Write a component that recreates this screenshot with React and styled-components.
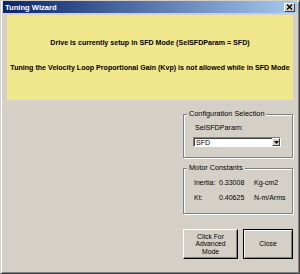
import React from 'react'
import styled, { createGlobalStyle } from 'styled-components'

const GlobalStyle = createGlobalStyle`
  html, body {
    margin: 0;
    padding: 0;
    background: #d4d0c8;
  }
  body {
    font-family: "Liberation Sans", Arial, sans-serif;
  }
`

const Window = styled.div`
  width: 300px;
  height: 274px;
  box-sizing: border-box;
  background: #d4d0c8;
  border-top: 1px solid #d4d0c8;
  border-left: 1px solid #d4d0c8;
  border-bottom: 1px solid #404040;
  border-right: 1px solid #404040;
  box-shadow: inset 1px 1px #fff, inset -1px -1px #808080;
  padding: 0 1px 1px 1px;
  display: flex;
  flex-direction: column;
`

const TitleBar = styled.div`
  height: 12px;
  margin: 0 1px;
  display: flex;
  align-items: center;
  justify-content: space-between;
  padding: 0 2px 0 2px;
  background: linear-gradient(to right, #0a246a, #a6caf0);
  color: #fff;
  font-weight: bold;
  font-size: 7.6px;
`

const CloseBox = styled.div`
  width: 11px;
  height: 9px;
  box-sizing: border-box;
  background: #d4d0c8;
  border-top: 1px solid #fff;
  border-left: 1px solid #fff;
  border-right: 1px solid #404040;
  border-bottom: 1px solid #404040;
  display: flex;
  align-items: center;
  justify-content: center;
`

const Body = styled.div`
  flex: 1;
  display: flex;
  flex-direction: column;
  padding: 2px 5px 0 5px;
`

const Banner = styled.div`
  height: 85px;
  background: #f0e68c;
  display: flex;
  flex-direction: column;
  align-items: center;
  padding-top: 24px;
  box-sizing: border-box;
  gap: 16px;
  font-weight: bold;
  font-size: 7.1px;
  line-height: 9px;
  color: #000;
  white-space: nowrap;
`

const Lower = styled.div`
  display: flex;
  justify-content: flex-end;
  padding-top: 10px;
`

const SideColumn = styled.div`
  width: 110px;
  display: flex;
  flex-direction: column;
`

const Group = styled.fieldset`
  margin: 0 0 ${(p) => p.$gap || 0}px 0;
  padding: 0 0 0 3px;
  height: ${(p) => p.$height}px;
  box-sizing: border-box;
  border: 1px solid #808080;
  box-shadow: inset 1px 1px #fff, 1px 1px #fff;
  font-size: 7px;
  color: #000;
`

const Legend = styled.legend`
  padding: 0 2px;
  margin: 0;
  font-size: 7.3px;
  line-height: 8px;
  background: #d4d0c8;
`

const FieldLabel = styled.div`
  margin: 6px 0 0 8px;
  font-size: 7.2px;
  line-height: 8px;
`

const Select = styled.div`
  margin: 5px 0 0 6px;
  width: 88px;
  height: 10px;
  box-sizing: border-box;
  background: #fff;
  border-top: 1px solid #808080;
  border-left: 1px solid #808080;
  border-right: 1px solid #fff;
  border-bottom: 1px solid #fff;
  box-shadow: inset 1px 1px #404040;
  display: flex;
  align-items: center;
  justify-content: space-between;
  padding-left: 2px;
  font-size: 7px;
`

const ArrowBtn = styled.div`
  width: 8px;
  height: 8px;
  box-sizing: border-box;
  background: #d4d0c8;
  border-top: 1px solid #fff;
  border-left: 1px solid #fff;
  border-right: 1px solid #404040;
  border-bottom: 1px solid #404040;
  display: flex;
  align-items: center;
  justify-content: center;
`

const ConstGrid = styled.div`
  display: grid;
  grid-template-columns: 25px 35px auto;
  row-gap: 7px;
  margin: 7px 0 0 7px;
  line-height: 8px;
`

const ButtonRow = styled.div`
  display: flex;
  gap: 5px;
`

const Button = styled.button`
  width: ${(p) => p.$width}px;
  height: 30px;
  box-sizing: border-box;
  padding: 0;
  background: #d4d0c8;
  font-family: "Liberation Sans", Arial, sans-serif;
  font-size: 6.8px;
  line-height: 7.5px;
  color: #000;
  border: 1px solid ${(p) => (p.$default ? '#000' : '#fff')};
  border-right-color: #000;
  border-bottom-color: #000;
  box-shadow: ${(p) =>
    p.$default
      ? 'inset 1px 1px #fff, inset -1px -1px #808080'
      : 'inset -1px -1px #808080'};
`

export default function App() {
  return (
    <>
      <GlobalStyle />
      <Window>
        <TitleBar>
          <span>Tuning Wizard</span>
          <CloseBox>
            <svg width="7" height="6" viewBox="0 0 7 6">
              <path d="M1 0.5 L6 5.5 M6 0.5 L1 5.5" stroke="#000" strokeWidth="1.4" />
            </svg>
          </CloseBox>
        </TitleBar>
        <Body>
          <Banner>
            <div>Drive is currently setup in SFD Mode (SelSFDParam = SFD)</div>
            <div>Tuning the Velocity Loop Proportional Gain (Kvp) is not allowed while in SFD Mode</div>
          </Banner>
          <Lower>
            <SideColumn>
              <Group $height={48} $gap={6}>
                <Legend>Configuration Selection</Legend>
                <FieldLabel>SelSFDParam:</FieldLabel>
                <Select>
                  <span>SFD</span>
                  <ArrowBtn>
                    <svg width="5" height="3" viewBox="0 0 5 3">
                      <path d="M0 0 H5 L2.5 3 Z" fill="#000" />
                    </svg>
                  </ArrowBtn>
                </Select>
              </Group>
              <Group $height={50} $gap={15}>
                <Legend>Motor Constants</Legend>
                <ConstGrid>
                  <span>Inertia:</span>
                  <span>0.33008</span>
                  <span>Kg-cm2</span>
                  <span>Kt:</span>
                  <span>0.40625</span>
                  <span>N-m/Arms</span>
                </ConstGrid>
              </Group>
              <ButtonRow>
                <Button $width={55}>
                  Click For
                  <br />
                  Advanced
                  <br />
                  Mode
                </Button>
                <Button $width={50} $default>
                  Close
                </Button>
              </ButtonRow>
            </SideColumn>
          </Lower>
        </Body>
      </Window>
    </>
  )
}
